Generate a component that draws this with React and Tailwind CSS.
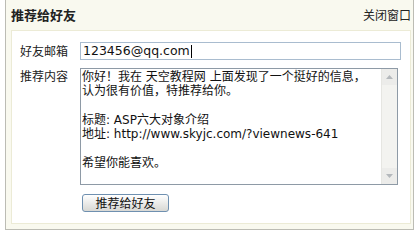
const FONT = { fontFamily: '"DejaVu Sans", "Noto Sans CJK SC", sans-serif' };
const CJK = { fontFamily: '"Noto Sans CJK SC", "DejaVu Sans", sans-serif' };

const Arrow = ({ up }) => (
  <svg width="7" height="4" viewBox="0 0 7 4">
    <path d={up ? "M0 4 L3.5 0 L7 4 Z" : "M0 0 L3.5 4 L7 0 Z"} fill="#b4b8bc" />
  </svg>
);

const lines = [
  "你好！我在 天空教程网 上面发现了一个挺好的信息，",
  "认为很有价值，特推荐给你。",
  "",
  "标题: ASP六大对象介绍",
  "地址: http://www.skyjc.com/?viewnews-641",
  "",
  "希望你能喜欢。",
];

export default function App() {
  return (
    <div className="w-[417px] h-[242px] bg-white text-[#111]" style={FONT}>
      <div className="ml-[5px] w-[409px] h-[230px] bg-[#f9f9ef] border-x border-b border-[#bcbcb4] flex flex-col">
        <div className="h-[30px] flex items-center justify-between pl-[5px] pr-[2px]">
          <span className="text-[13px] font-bold text-[#222]" style={CJK}>
            推荐给好友
          </span>
          <span className="text-[12px] text-[#222]" style={CJK}>
            关闭窗口
          </span>
        </div>
        <div className="flex-1 ml-[5px] mr-[2px] mb-[5px] bg-white border border-[#ecebd6] pt-[11px] pl-[8px]">
          <div className="flex items-center">
            <span className="w-[60px] text-[12px] text-[#222]" style={CJK}>
              好友邮箱
            </span>
            <div className="w-[321px] h-[18px] border border-[#a9bccf] flex items-center pl-[2px]">
              <span className="text-[12.5px] leading-none">123456@qq.com</span>
              <span className="w-px h-[13px] bg-black ml-px" />
            </div>
          </div>
          <div className="flex items-start mt-[8px]">
            <span className="w-[60px] text-[12px] text-[#222] leading-[14px] pt-[1px]" style={CJK}>
              推荐内容
            </span>
            <div className="w-[318px] h-[117px] border border-[#8e9aa6] flex">
              <div className="flex-1 pl-[1px] pt-px text-[12px] leading-[14.3px] whitespace-pre">
                {lines.map((l, i) => (
                  <div key={i} className="h-[14.3px]">
                    {l}
                  </div>
                ))}
              </div>
              <div className="w-[16px] bg-[#f3f3f0] border-l border-[#e6e6e2] flex flex-col justify-between">
                <div className="h-[16px] bg-[#ececea] flex items-center justify-center">
                  <Arrow up />
                </div>
                <div className="h-[16px] bg-[#ececea] flex items-center justify-center">
                  <Arrow />
                </div>
              </div>
            </div>
          </div>
          <div className="pl-[62px] mt-[9px]">
            <button
              className="w-[87px] h-[18px] rounded-[3px] border border-[#6f90b0] bg-gradient-to-b from-white to-[#d8d8d4] text-[12px] leading-none text-[#111] flex items-center justify-center"
              style={CJK}
            >
              推荐给好友
            </button>
          </div>
        </div>
      </div>
    </div>
  );
}
